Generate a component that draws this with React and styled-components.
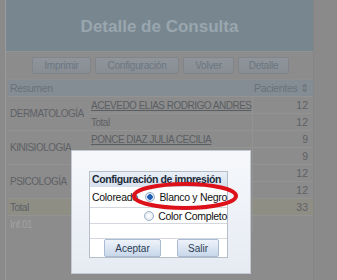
import React from "react";
import styled, { createGlobalStyle } from "styled-components";

const GlobalStyle = createGlobalStyle`
  html, body {
    margin: 0;
    padding: 0;
    background: #8a8a8a;
    font-family: "Liberation Sans", Arial, sans-serif;
    overflow: hidden;
  }
`;

const Page = styled.div`
  position: relative;
  width: 337px;
  height: 280px;
  overflow: hidden;
`;

const Sheet = styled.div`
  margin-left: 5px;
  width: 309px;
  height: 280px;
  border-left: 1px solid #9a9a9a;
  border-right: 1px solid #858585;
  background: #8c8c8c;
  box-sizing: border-box;
`;

const Header = styled.div`
  height: 52px;
  background: #788690;
  border-bottom: 1px solid #8f9499;
  display: flex;
  align-items: center;
  justify-content: center;
  box-sizing: border-box;
`;

const Title = styled.h1`
  margin: 0;
  font-size: 17px;
  font-weight: bold;
  color: #9aa6ae;
  padding-top: 2px;
`;

const Toolbar = styled.div`
  height: 28px;
  display: flex;
  align-items: center;
  gap: 4px;
  padding-left: 26px;
  box-sizing: border-box;
  border-bottom: 1px solid #8f8f8f;
`;

const ToolButton = styled.button`
  height: 17px;
  width: ${(p) => p.$w}px;
  padding: 0;
  border: 1px solid #7f858b;
  border-radius: 2px;
  background: linear-gradient(#8f959b, #878d93);
  color: #6b7681;
  font-family: inherit;
  font-size: 10px;
  letter-spacing: -0.2px;
`;

const Table = styled.table`
  margin-left: 2px;
  width: 305px;
  border-collapse: collapse;
  color: #5e6165;
  table-layout: fixed;
`;

const HeadCell = styled.th`
  height: 16px;
  padding: 0 5px 0 2px;
  background: #858d94;
  color: #68717a;
  font-weight: normal;
  white-space: nowrap;
  font-size: 10.5px;
  letter-spacing: -0.3px;
  text-align: ${(p) => (p.$right ? "right" : "left")};
`;

const Cell = styled.td`
  height: 17px;
  padding: 0 ${(p) => (p.$right ? 5 : 0)}px 0 2px;
  border-top: 1px solid #939393;
  text-align: ${(p) => (p.$right ? "right" : "left")};
  white-space: nowrap;
  overflow: hidden;
  box-sizing: border-box;
  font-size: ${(p) => (p.$right ? "10.5px" : "10px")};
  letter-spacing: ${(p) => (p.$right ? "0" : "-0.5px")};
  background: ${(p) => (p.$total ? "#8e8e85" : "transparent")};
  color: ${(p) => (p.$muted ? "#a2a2a2" : "#5e6165")};
  border-left: ${(p) => (p.$right ? "1px solid #939393" : "none")};
`;

const NameLink = styled.span`
  text-decoration: underline;
  color: #5a5e63;
`;

const Modal = styled.div`
  position: absolute;
  left: 71px;
  top: 150px;
  width: 180px;
  height: 124px;
  box-sizing: border-box;
  padding: 20px 0 0 17px;
  background: linear-gradient(#f6f8fb, #e6ebf3);
  border: 1px solid #c4c9d1;
`;

const Panel = styled.div`
  width: 139px;
  height: 87px;
  box-sizing: border-box;
  border: 1px solid #b7bec8;
  background: #fff;
  display: flex;
  flex-direction: column;
`;

const PanelTitle = styled.div`
  height: 15px;
  background: linear-gradient(#e9eff6, #d6e0ec);
  color: #1e2b3a;
  font-size: 10.5px;
  letter-spacing: -0.4px;
  font-weight: bold;
  line-height: 15px;
  padding-left: 2px;
  white-space: nowrap;
  overflow: hidden;
`;

const PanelRow = styled.div`
  height: ${(p) => p.$h}px;
  display: flex;
  align-items: center;
  border-bottom: 1px solid #d4d8de;
  font-size: 10.5px;
  letter-spacing: -0.3px;
  color: #111;
  box-sizing: border-box;
`;

const Label = styled.div`
  width: 54px;
  padding-left: 2px;
  overflow: hidden;
  white-space: nowrap;
`;

const Option = styled.div`
  display: flex;
  align-items: center;
  gap: 4px;
  white-space: nowrap;
`;

const Radio = styled.span`
  width: 8px;
  height: 8px;
  border-radius: 50%;
  border: 1px solid #9ab0c8;
  background: ${(p) =>
    p.$on
      ? "radial-gradient(circle, #1f5fb5 0 2.5px, #dfe9f5 3px)"
      : "radial-gradient(circle, #fff, #dde3ea)"};
`;

const ButtonRow = styled.div`
  flex: 1;
  display: flex;
  align-items: center;
  gap: 16px;
  padding-left: 14px;
`;

const DialogButton = styled.button`
  width: ${(p) => p.$w}px;
  height: 18px;
  padding: 0;
  border: 1px solid #a8bbd2;
  border-radius: 2px;
  background: linear-gradient(#eef3fa, #c8d7ea);
  color: #2c3d55;
  font-family: inherit;
  font-size: 10px;
`;

const Mark = styled.svg`
  position: absolute;
  left: 130px;
  top: 180px;
`;

const rows = [
  { group: "DERMATOLOGÍA", name: "ACEVEDO ELIAS RODRIGO ANDRES", n: 12 },
  { name: "Total", n: 12, plain: true },
  { group: "KINISIOLOGIA", name: "PONCE DIAZ JULIA CECILIA", n: 9 },
  { name: "", n: 9, plain: true },
  { group: "PSICOLOGÍA", name: "", n: 12 },
  { name: "", n: 12, plain: true },
];

export default function App() {
  return (
    <Page>
      <GlobalStyle />
      <Sheet>
        <Header>
          <Title>Detalle de Consulta</Title>
        </Header>
        <Toolbar>
          <ToolButton $w={59}>Imprimir</ToolButton>
          <ToolButton $w={84}>Configuración</ToolButton>
          <ToolButton $w={51}>Volver</ToolButton>
          <ToolButton $w={51}>Detalle</ToolButton>
        </Toolbar>
        <Table>
          <colgroup>
            <col style={{ width: 81 }} />
            <col style={{ width: 163 }} />
            <col style={{ width: 61 }} />
          </colgroup>
          <thead>
            <tr>
              <HeadCell colSpan={2}>Resumen</HeadCell>
              <HeadCell $right>Pacientes ⇕</HeadCell>
            </tr>
          </thead>
          <tbody>
            {rows.map((r, i) => (
              <tr key={i}>
                {r.group && <Cell rowSpan={2}>{r.group}</Cell>}
                <Cell>{r.plain ? r.name : <NameLink>{r.name}</NameLink>}</Cell>
                <Cell $right>{r.n}</Cell>
              </tr>
            ))}
            <tr>
              <Cell $total colSpan={2}>Total</Cell>
              <Cell $total $right>33</Cell>
            </tr>
            <tr>
              <Cell $muted colSpan={2}>Inf.01</Cell>
              <Cell $right></Cell>
            </tr>
          </tbody>
        </Table>
      </Sheet>

      <Modal>
        <Panel>
          <PanelTitle>Configuración de impresión</PanelTitle>
          <PanelRow $h={21}>
            <Label>Coloreado</Label>
            <Option>
              <Radio $on />
              Blanco y Negro
            </Option>
          </PanelRow>
          <PanelRow $h={16}>
            <Label />
            <Option>
              <Radio />
              Color Completo
            </Option>
          </PanelRow>
          <PanelRow $h={15} />
          <ButtonRow>
            <DialogButton $w={57}>Aceptar</DialogButton>
            <DialogButton $w={42}>Salir</DialogButton>
          </ButtonRow>
        </Panel>
      </Modal>

      <Mark width="110" height="32" viewBox="0 0 110 32">
        <ellipse
          cx="55"
          cy="16"
          rx="51"
          ry="12"
          fill="none"
          stroke="#dd111a"
          strokeWidth="4"
        />
      </Mark>
    </Page>
  );
}
